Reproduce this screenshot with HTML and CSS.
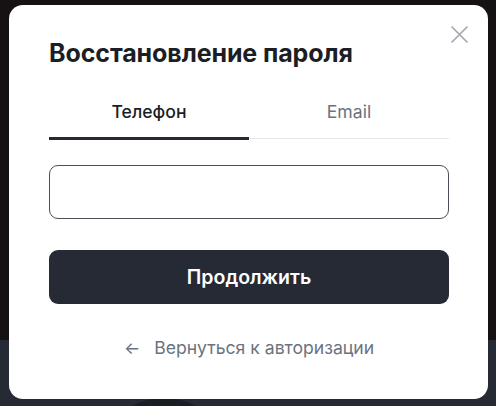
FILE: index.html
```html
<!DOCTYPE html>
<html lang="ru">
<head>
<meta charset="utf-8">
<link rel="stylesheet" href="styles.css">
</head>
<body>
<div class="backdrop">
  <div class="backdrop-top"></div>
  <div class="backdrop-bottom"><div class="blob"></div></div>
</div>
<div class="overlay">
  <div class="modal">
    <button class="close" aria-label="Закрыть">
      <svg width="17" height="17" viewBox="0 0 17 17"><path d="M1 1 L16 16 M16 1 L1 16" stroke="#a3a8b0" stroke-width="1.7" fill="none" stroke-linecap="round"/></svg>
    </button>
    <h1 class="title">Восстановление пароля</h1>
    <div class="tabs">
      <div class="tab active">Телефон</div>
      <div class="tab">Email</div>
    </div>
    <input class="field" type="text">
    <button class="submit">Продолжить</button>
    <a class="back" href="#"><span class="arrow">←</span>Вернуться к авторизации</a>
  </div>
</div>
</body>
</html>
```

FILE: styles.css
```css
* { box-sizing: border-box; }
html, body { margin: 0; padding: 0; }
body {
  width: 496px;
  height: 406px;
  overflow: hidden;
  font-family: Inter, "Noto Sans", sans-serif;
  position: relative;
}
.backdrop {
  position: absolute;
  inset: 0;
  display: flex;
  flex-direction: column;
  overflow: hidden;
}
.backdrop-top { height: 340px; background: #161112; }
.backdrop-bottom {
  flex: 1;
  background: #252a35;
  position: relative;
  overflow: hidden;
}
.blob {
  position: absolute;
  left: 118px;
  top: 58px;
  width: 92px;
  height: 60px;
  border-radius: 50%;
  background: #1a1d24;
}
.overlay {
  position: absolute;
  inset: 0;
  padding: 5px 8px 7px 9px;
  display: flex;
}
.modal {
  position: relative;
  flex: 1;
  background: #fff;
  border-radius: 14px;
  padding: 32px 39px 0 40px;
  display: flex;
  flex-direction: column;
  overflow: hidden;
}
.close {
  position: absolute;
  top: 21px;
  right: 20px;
  padding: 0;
  border: 0;
  background: none;
  width: 17px;
  height: 17px;
}
.close svg { display: block; }
.title {
  margin: 0;
  font-size: 25px;
  line-height: 32px;
  font-weight: 700;
  color: #1b1e25;
  letter-spacing: -0.1px;
}
.tabs {
  display: flex;
  margin-top: 32px;
  border-bottom: 1px solid #e5e7eb;
}
.tab {
  flex: 1;
  text-align: center;
  font-size: 17.6px;
  line-height: 22px;
  padding-bottom: 14px;
  color: #6b7280;
  font-weight: 400;
  margin-bottom: -2px;
  border-bottom: 3px solid transparent;
}
.tab.active {
  color: #1b1e25;
  font-weight: 500;
  border-bottom-color: #252a35;
}
.field {
  margin-top: 26px;
  height: 54px;
  border: 1px solid #4b5058;
  border-radius: 9px;
  background: #fff;
  font: inherit;
  padding: 0 16px;
  flex-shrink: 0;
}
.submit {
  margin-top: 31px;
  height: 54px;
  border: 0;
  border-radius: 9px;
  background: #252a35;
  color: #fff;
  font-family: inherit;
  font-size: 19.5px;
  font-weight: 600;
  flex-shrink: 0;
}
.back {
  margin-top: 33px;
  align-self: center;
  display: flex;
  align-items: center;
  gap: 14px;
  font-size: 17.6px;
  line-height: 22px;
  color: #6b7280;
  text-decoration: none;
}
.arrow { font-size: 17px; }
```
